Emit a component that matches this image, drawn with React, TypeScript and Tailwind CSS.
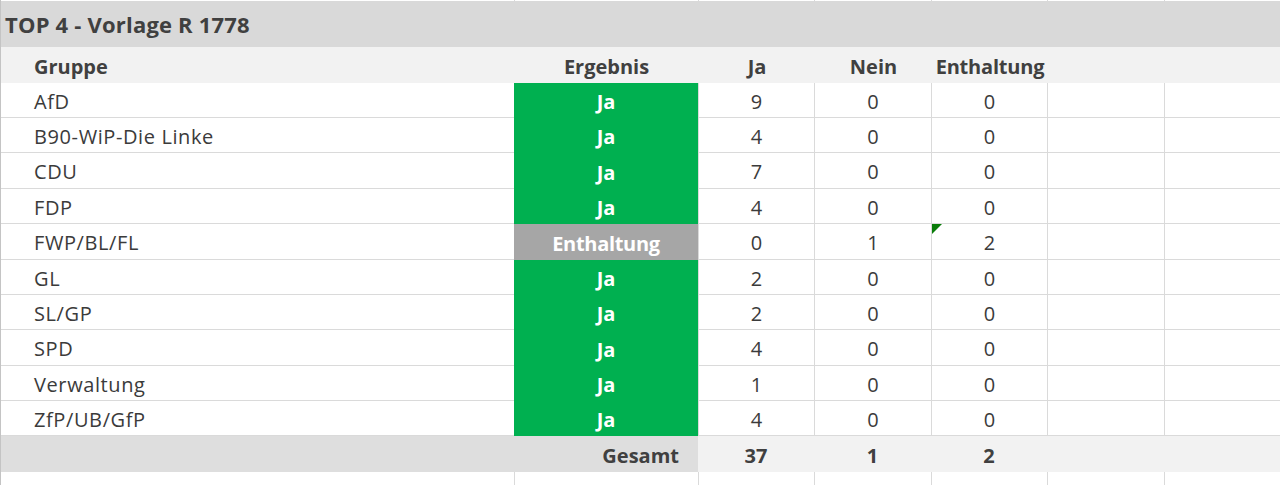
import React from "react";

const rows = [
  { name: "AfD", result: "Ja", ja: 9, nein: 0, enth: 0, h: "h-[35px]" },
  { name: "B90-WiP-Die Linke", result: "Ja", ja: 4, nein: 0, enth: 0, h: "h-[35px]" },
  { name: "CDU", result: "Ja", ja: 7, nein: 0, enth: 0, h: "h-[36px]" },
  { name: "FDP", result: "Ja", ja: 4, nein: 0, enth: 0, h: "h-[35px]" },
  { name: "FWP/BL/FL", result: "Enthaltung", ja: 0, nein: 1, enth: 2, h: "h-[36px]", flag: true },
  { name: "GL", result: "Ja", ja: 2, nein: 0, enth: 0, h: "h-[35px]" },
  { name: "SL/GP", result: "Ja", ja: 2, nein: 0, enth: 0, h: "h-[35px]" },
  { name: "SPD", result: "Ja", ja: 4, nein: 0, enth: 0, h: "h-[36px]" },
  { name: "Verwaltung", result: "Ja", ja: 1, nein: 0, enth: 0, h: "h-[35px]" },
  { name: "ZfP/UB/GfP", result: "Ja", ja: 4, nein: 0, enth: 0, h: "h-[35px]" },
];

const font = { fontFamily: '"Open Sans", "Noto Sans", sans-serif' };

// plain grid cell for the number columns
const NumCell = ({ w, children, flag }: { w: string; children?: React.ReactNode; flag?: boolean }) => (
  <div className={`${w} relative h-full border-l border-b border-[#dadada] flex items-center justify-center pt-[3px]`}>
    {flag && (
      <div className="absolute left-0 top-0 w-0 h-0 border-t-[10px] border-t-[#0a7d0a] border-r-[10px] border-r-transparent" />
    )}
    {children}
  </div>
);

const Spacer = ({ h }: { h: string }) => (
  <div className={`flex ${h}`}>
    <div className="w-[513px]" />
    <div className="w-[184px] border-l border-[#dadada]" />
    <div className="w-[116px] border-l border-[#dadada]" />
    <div className="w-[117px] border-l border-[#dadada]" />
    <div className="w-[116px] border-l border-[#dadada]" />
    <div className="w-[117px] border-l border-[#dadada]" />
    <div className="flex-1 border-l border-[#dadada]" />
  </div>
);

export default function App() {
  return (
    <div className="w-[1280px] h-[485px] bg-white text-[#3b3b3b] border-l border-[#c4c4c4] overflow-hidden" style={font}>
      <Spacer h="h-[1px]" />

      {/* title */}
      <div className="h-[46px] bg-[#d9d9d9] flex items-center pl-[4px] pt-[1px] text-[22px] font-bold text-[#404040] tracking-[0.2px]">
        TOP 4 - Vorlage R 1778
      </div>

      {/* header */}
      <div className="h-[36px] bg-[#f2f2f2] flex items-center pt-[3px] text-[20px] font-bold text-[#404040]">
        <div className="w-[513px] pl-[33px]">Gruppe</div>
        <div className="w-[185px] text-center">Ergebnis</div>
        <div className="w-[116px] text-center">Ja</div>
        <div className="w-[117px] text-center">Nein</div>
        <div className="w-[116px] text-center tracking-[-0.2px]">Enthaltung</div>
      </div>

      {/* data rows */}
      {rows.map((r) => (
        <div key={r.name} className={`${r.h} flex text-[20px]`}>
          <div className="w-[513px] h-full border-b border-[#dadada] flex items-center pl-[33px] pt-[3px] tracking-[0.6px]">
            {r.name}
          </div>
          <div
            className={`w-[184px] h-full flex items-center justify-center pt-[3px] font-bold text-white ${
              r.result === "Ja" ? "bg-[#00b050]" : "bg-[#a6a6a6] tracking-[-0.3px]"
            }`}
          >
            {r.result}
          </div>
          <NumCell w="w-[116px]">{r.ja}</NumCell>
          <NumCell w="w-[117px]">{r.nein}</NumCell>
          <NumCell w="w-[116px]" flag={r.flag}>{r.enth}</NumCell>
          <NumCell w="w-[117px]" />
          <div className="flex-1 h-full border-l border-b border-[#dadada]" />
        </div>
      ))}

      {/* total */}
      <div className="h-[36px] flex text-[20px] font-bold text-[#404040]">
        <div className="w-[697px] bg-[#dedede] flex items-center justify-end pr-[19px] pt-[3px]">Gesamt</div>
        <div className="flex-1 bg-[#f2f2f2] flex items-center pt-[3px]">
          <div className="w-[116px] text-center">37</div>
          <div className="w-[117px] text-center">1</div>
          <div className="w-[116px] text-center">2</div>
        </div>
      </div>

      <Spacer h="h-[13px]" />
    </div>
  );
}
